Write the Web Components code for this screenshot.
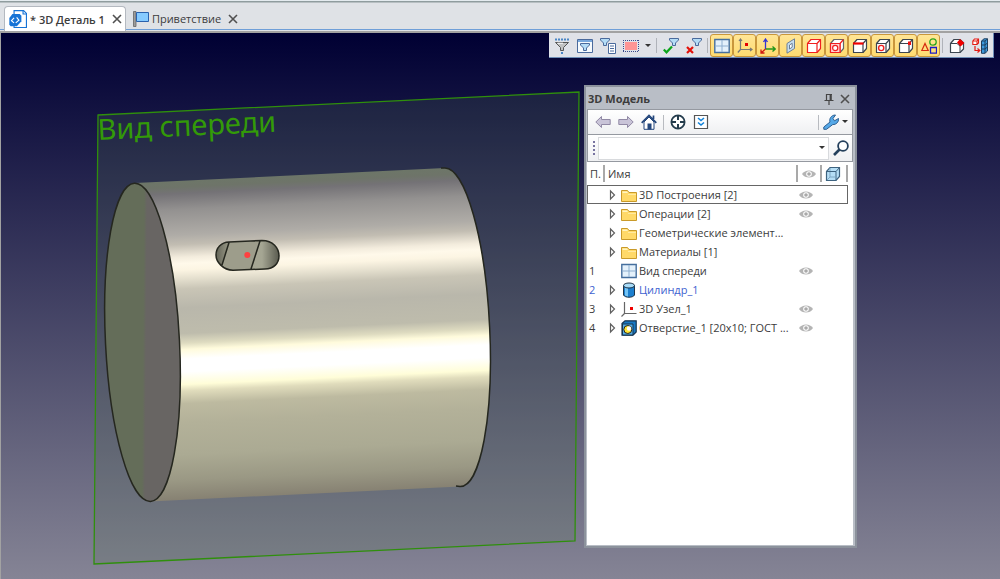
<!DOCTYPE html>
<html lang="ru">
<head>
<meta charset="UTF-8">
<title>3D Деталь 1</title>
<style>
    html, body {
        margin: 0;
        height: 100%;
        overflow: hidden;
    }
    body {
        font-family: "Open Sans", "Noto Sans", sans-serif;
        font-size: 11px;
        color: #3c3c3c;
    }
</style>
</head>
<body>
<cad-app></cad-app>

<script>
/* Icon set, every glyph is drawn on a 16x16 grid unless a viewBox is given */
const cube = (front, edge, extra = '') => `
    <path d="M1.5 5.5 5 1.5H14.5V10.5L11 14.5H1.5Z" fill="#fff" stroke="${edge}" stroke-width="1.2" stroke-linejoin="round"/>
    <path d="M1.5 5.5H11V14.5M11 5.5 14.5 1.5" fill="none" stroke="${front}" stroke-width="1.2"/>${extra}`;

const funnel = (x, y) => `
    <path transform="translate(${x} ${y})" d="M.5 .5H9.5V2L6.5 5V7.5H3.5V5L.5 2Z" fill="#b4dcf6" stroke="#4a6a9c"/>`;

const ICONS = {
    detail: `<path d="M4.5 .5H13L15.5 3V15.5H4.5Z" fill="#fff" stroke="#1673d6"/>
        <path d="M12.5 .5V3.5H15.5" fill="none" stroke="#1673d6"/>
        <path d="M3 3.5H9.5L11 5V10L7 14.5H1.5L.3 13V7Z" fill="#1673d6"/>
        <path d="M4.5 7 2.2 9.5 4.5 11.5M6 11.5 8.8 9 6.8 6.5" stroke="#fff" fill="none"/>`,
    flag: `<path d="M.5 .5H3V15.5H.5Z" fill="#9c9c9c" stroke="#666" stroke-width=".8"/>
        <path d="M3.5 1.5H15.5V10.5H3.5Z" fill="#86cbff" stroke="#2b62ad"/>`,
    close: `<path d="M4 4 12 12M12 4 4 12" stroke="#505050" stroke-width="1.6" fill="none"/>`,
    pin: `<path d="M5.5 3V9M5 3.5H11M3.5 9.5H12.5M8 10V14" stroke="#454545" fill="none" stroke-width="1.2"/>
        <path d="M9.7 3V9" stroke="#454545" stroke-width="2.2"/>`,
    filter: `<path d="M1 1.5H15" stroke="#4a86c5" stroke-width="2" stroke-dasharray="2 1"/>
        <path d="M1.5 4.5H14.5L9.5 9.5V12.5H6.5V9.5Z" fill="#c2c2c2" stroke="#555"/>
        <path d="M3.5 5.2H9" stroke="#fff"/><path d="M7 14H9V16H7Z" fill="#4a86c5"/>`,
    filterWindow: `<path d="M.5 1.5H15.5V14.5H.5Z" fill="#f6fafd" stroke="#4a6a9c"/>
        <path d="M1 2H15V4H1Z" fill="#79a8dc"/>${funnel(3, 5)}`,
    filterList: `${funnel(0, 0)}<path d="M8.5 5.5H15.5V15.5H8.5Z" fill="#fff" stroke="#4a6a9c"/>
        <path d="M10 8H14M10 10.5H14M10 13H14" stroke="#4a6a9c"/>`,
    area: `<path d="M2 4H14V12H2Z" fill="#ff9595"/>
        <path d="M0 2.5H16M0 13.5H16M.5 2V14M15.5 2V14" fill="none" stroke="#3a4a8c" stroke-dasharray="1 1"/>`,
    down: `<path d="M1 6H7L4 9Z" fill="#333"/>`,
    filterOk: `${funnel(6, 0)}<path d="M.8 11.5 3.5 14.3 9 8.5" fill="none" stroke="#0ca51b" stroke-width="2.2"/>`,
    filterNo: `${funnel(6, 0)}<path d="M1 9 7 15M7 9 1 15" fill="none" stroke="#e3120b" stroke-width="2.2"/>`,
    plane: `<path d="M.8 1.5H15.2V14.5H.8Z" fill="#e4f1fb" stroke="#456f9e" stroke-width="1.4"/>
        <path d="M8 2V14M1.5 8H14.5" stroke="#8eafd0"/>`,
    node: `<path d="M3.5 1V11.5H15M.8 14.5 3.5 11.5M2 3 3.5 1 5 3M13 10 15 11.5 13 13" fill="none" stroke="#777" stroke-width="1.2"/>
        <path d="M8 5H11V8H8Z" fill="#e60000"/>`,
    axes: `<path d="M5.5 11V1M3.5 4 5.5 1 7.5 4" fill="none" stroke="#3535d5" stroke-width="1.3"/>
        <path d="M5.5 11H15M12.5 8.5 15.2 11 12.5 13.5" fill="none" stroke="#24951c" stroke-width="1.3"/>
        <path d="M5.5 11 1 15M1 11.5V15H4.5" fill="none" stroke="#d11a10" stroke-width="1.3"/>`,
    sheet: `<path d="M4 5.5 11.5 .8V10.5L4 15.2Z" fill="#c6def0" stroke="#6b7f95"/>
        <path d="M6.5 7 9.2 5.3V9.2L6.5 11Z" fill="#fff" stroke="#6b7f95"/>`,
    cubeRed: cube('#f02020', '#f02020'),
    cubeFace: cube('#f02020', '#666', '<path d="M1.5 5.5H11V14.5H1.5Z" fill="#ffd5d5" stroke="#f02020" stroke-width="1.2"/><circle cx="6.2" cy="10" r="2.6" fill="#fff" stroke="#f02020" stroke-width="1.2"/>'),
    cubeEdge: cube('#3c4650', '#3c4650', '<path d="M1 5.5H11.5" stroke="#f00000" stroke-width="2.2"/>'),
    cubeHole: cube('#3c4650', '#3c4650', '<circle cx="6.2" cy="10" r="2.6" fill="#fff" stroke="#f02020" stroke-width="1.4"/>'),
    cubeVertex: cube('#3c4650', '#3c4650', '<path d="M10 3.500H13V7H10Z" fill="#f01010"/>'),
    shapes: `<path d="M.8 12.5 4 5.5 7.2 12.5Z" fill="none" stroke="#d52a10" stroke-width="1.2"/>
        <circle cx="12" cy="4" r="3.2" fill="none" stroke="#2aa51e" stroke-width="1.3"/>
        <path d="M9.5 9.5H15.5V15.2H9.5Z" fill="none" stroke="#1b1bc8" stroke-width="1.3"/>`,
    cubeCorner: `<path d="M1.500 5.500 5 1.500H11L14.500 5V11L11 14.500H1.500Z" fill="#fff" stroke="#3c4650" stroke-width="1.2" stroke-linejoin="round"/>
        <path d="M1.500 5.500H8L11 8V14.500" fill="none" stroke="#3c4650"/><path d="M8 4.500 11 1 15.500 5 11.500 8.500Z" fill="#f00000"/>`,
    rebuild: `<path d="M.8 3 2.5 1H6.5V5L5 6.5H.8ZM.8 3H5V6.5M5 3 6.5 1" fill="#fff" stroke="#e31b14" stroke-width="1.1"/>
        <path d="M3 8V12.5H7.5M5.5 10.5 7.8 12.5 5.5 14.5" fill="none" stroke="#e31b14" stroke-width="1.2"/>
        <path d="M9.5 3 12 .8H15.5V13L13 15.3H9.5Z" fill="#3c9ade" stroke="#1f3e5c"/>
        <path d="M9.5 3H13V15M13 3 15.5 1M9.5 7H13L15.5 5M9.5 11H13L15.5 9" fill="none" stroke="#1f3e5c"/>`,
    back: `<path d="M.8 8 6.500 2.500V5.500H15.2V10.500H6.500V13.5Z" fill="#c9c4d8" stroke="#9189a5"/>`,
    forward: `<path d="M15.2 8 9.500 2.500V5.500H.8V10.500H9.500V13.5Z" fill="#c9c4d8" stroke="#9189a5"/>`,
    home: `<path d="M3 8V15.3H13V8L8 3Z" fill="#fff" stroke="#24477c"/>
        <path d="M.7 8.8 8 1.5 15.3 8.8M12.5 5V1.5" fill="none" stroke="#24477c" stroke-width="1.7"/>
        <path d="M6.5 9.5H10.5V15.5H6.5Z" fill="#24477c"/>`,
    target: `<circle cx="8" cy="8" r="6.6" fill="#fff" stroke="#243c4c" stroke-width="1.8"/>
        <path d="M8 1V6M8 10V15M1 8H6M10 8H15" stroke="#243c4c" stroke-width="2"/>`,
    expand: `<path d="M1.5 1.5H14.5V14.5H1.5Z" fill="#fff" stroke="#555" stroke-width="1.2"/>
        <path d="M5 4 8 6.5 11 4M5 8.5 8 11 11 8.5" fill="none" stroke="#1382d8" stroke-width="1.6"/>`,
    wrench: `<path d="M.8 13 7 8C6 5 8 1 12.5 1L10 4.5 11.5 6.8 15.5 4.5C16 8 13 10.8 9.8 10.5L3.5 15.3H.8Z" fill="#56a9e8" stroke="#2d5f91" stroke-linejoin="round"/>`,
    search: `<circle cx="10" cy="6" r="4.9" fill="#fff" stroke="#24405c" stroke-width="1.8"/>
        <path d="M6.5 9.5 1 15" stroke="#24405c" stroke-width="2.6"/>`,
    eye: `<path d="M1 8C4 3.200 12 3.200 15 8C12 12.800 4 12.800 1 8Z" fill="#b4b4b4"/>
        <circle cx="8" cy="8" r="2.800" fill="#fff"/><circle cx="8" cy="8" r="1.800" fill="#aaa"/>`,
    cubeBlue: `<path d="M1.5 5.5 5 1.5H14.5V10.5L11 14.5H1.5Z" fill="#b5def6" stroke="#3d6380" stroke-width="1.2"/>
        <path d="M1.5 5.5H11V14.5M11 5.5 14.5 1.5" fill="none" stroke="#3d6380"/>
        <path d="M5 2V5M5 11H10.500M5 6V11L2 14" fill="none" stroke="#7fa9c6"/>`,
    expander: `<path d="M5.500 4 9.500 8 5.500 12Z" fill="#fff" stroke="#606060" stroke-width="1.2"/>`,
    folder: `<path d="M.5 3.5H6.5L8 5.5H15.5V14.5H.5Z" fill="#ffd968" stroke="#c99a2a"/>
        <path d="M1.5 4.5H6L7 6H1.5Z" fill="#fff4c0"/><path d="M7 7.5H15" stroke="#ffe9a0"/>`,
    cylinder: `<path d="M2.5 3.5V13C4 16 12 16 13.5 13V3.5Z" fill="#1d80cf" stroke="#1f3448"/>
        <path d="M4 5V13.5L7 14.5V6Z" fill="#74c4f5"/>
        <ellipse cx="8" cy="3.5" rx="5.5" ry="2.5" fill="#a9dcf8" stroke="#1f3448"/>`,
    nodeSmall: `<path d="M3.5 1V12.5H15.5M.5 15.5 3.5 12.5" fill="none" stroke="#666" stroke-width="1.2"/>
        <path d="M9 6H12V9H9Z" fill="#f00000"/>`,
    hole: `<path d="M1 3.5 4 .8H15.2V12L12 15.2H1Z" fill="#1779c4" stroke="#16344f" stroke-width="1.2"/>
        <path d="M1.5 4H12V15H1.5Z" fill="#53aee8" stroke="#16344f"/>
        <circle cx="6.8" cy="9.5" r="4" fill="#ffe531" stroke="#222"/><circle cx="8" cy="8.500" r="2.200" fill="#fff"/>`
};

/** Inline icon, <cad-icon name="home"> */
class CadIcon extends HTMLElement {
    constructor() {
        super();
        this.attachShadow({ mode: 'open' });
    }

    connectedCallback() {
        const name = this.getAttribute('name');
        const box = name === 'down' ? '0 0 8 16' : '0 0 16 16';
        this.shadowRoot.innerHTML = `
            <style>
                :host { display: inline-flex; width: 16px; height: 16px; flex: none; }
                :host([name="down"]) { width: 8px; }
                :host([name="detail"]) { width: 18px; height: 18px; }
                svg { width: 100%; height: 100%; display: block; }
            </style>
            <svg viewBox="${box}" aria-hidden="true">${ICONS[name] || ''}</svg>`;
    }
}

/** Icon button, "pressed" gives the yellow toggle look */
class ToolButton extends HTMLElement {
    constructor() {
        super();
        this.attachShadow({ mode: 'open' });
    }

    connectedCallback() {
        const toggle = this.hasAttribute('pressed') ? 'aria-pressed="true"' : '';
        this.shadowRoot.innerHTML = `
            <style>
                :host { display: inline-flex; width: 23px; height: 23px; flex: none; }
                :host([icon="down"]) { width: 12px; }
                :host([icon="wrench"]) { width: 20px; }
                button {
                    display: flex;
                    align-items: center;
                    justify-content: center;
                    width: 100%;
                    padding: 0;
                    border: 1px solid transparent;
                    border-radius: 3px;
                    background: none;
                }
                button[aria-pressed="true"] {
                    border-color: #c9973c;
                    background: linear-gradient(#ffe596, #ffdc70);
                }
            </style>
            <button type="button" ${toggle} aria-label="${this.getAttribute('label')}">
                <cad-icon name="${this.getAttribute('icon')}"></cad-icon>
            </button>`;
        const button = this.shadowRoot.querySelector('button');
        if (toggle) {
            button.addEventListener('click', () => {
                button.setAttribute('aria-pressed', button.getAttribute('aria-pressed') !== 'true');
            });
        }
    }
}

/** Document tab */
class DocTab extends HTMLElement {
    constructor() {
        super();
        this.attachShadow({ mode: 'open' });
    }

    connectedCallback() {
        this.shadowRoot.innerHTML = `
            <style>
                :host {
                    display: flex;
                    align-items: center;
                    box-sizing: border-box;
                    height: 25px;
                    padding: 0 0 0 4px;
                }
                :host([active]) {
                    border: 1px solid #b4b9c0;
                    border-bottom: 0;
                    border-radius: 4px 4px 0 0;
                    background: #fff;
                    font-weight: 600;
                }
                a {
                    display: flex;
                    align-items: center;
                    gap: 3px;
                    color: inherit;
                    text-decoration: none;
                    white-space: nowrap;
                }
                button {
                    display: flex;
                    margin-left: 4px;
                    padding: 0;
                    border: 0;
                    background: none;
                }
            </style>
            <a href="#"><cad-icon name="${this.getAttribute('icon')}"></cad-icon><slot></slot></a>
            <button type="button" aria-label="Закрыть"><cad-icon name="close"></cad-icon></button>`;
    }
}

class TabBar extends HTMLElement {
    constructor() {
        super();
        this.attachShadow({ mode: 'open' });
    }

    connectedCallback() {
        this.shadowRoot.innerHTML = `
            <style>
                :host {
                    display: flex;
                    align-items: flex-end;
                    gap: 3px;
                    box-sizing: border-box;
                    height: 33px;
                    flex: none;
                    padding-left: 4px;
                    border-bottom: 2px solid #a2a2a2;
                    background:
                        linear-gradient(#6f9fd8, #6f9fd8) 0 29px / 100% 1px no-repeat,
                        linear-gradient(#e4ebef 1px, #8f9c9e 1px, #8f9c9e 2px, #dfe2e6 3px);
                }
            </style>
            <slot></slot>`;
    }
}

/** Selection filter strip over the model window */
class FilterBar extends HTMLElement {
    constructor() {
        super();
        this.attachShadow({ mode: 'open' });
    }

    connectedCallback() {
        const groups = [
            [['filter', 'Фильтр'], ['filterWindow', 'Окно фильтра'], ['filterList', 'Список фильтров'], ['area', 'Выделение рамкой'], ['down', 'Ещё']],
            [['filterOk', 'Включить все'], ['filterNo', 'Выключить все']],
            [['plane', 'Плоскости'], ['node', 'Системы координат'], ['axes', 'Оси'], ['sheet', 'Поверхности'], ['cubeRed', 'Тела'],
                ['cubeFace', 'Грани'], ['cubeEdge', 'Рёбра'], ['cubeHole', 'Отверстия'], ['cubeVertex', 'Вершины'], ['shapes', 'Эскизы']],
            [['cubeCorner', 'Угол'], ['rebuild', 'Перестроить']]
        ];
        const html = groups.map((group, i) => `
            <div class="group">
                ${group.map(([icon, label]) => `<tool-button icon="${icon}" label="${label}" ${i === 2 ? 'pressed' : ''}></tool-button>`).join('')}
            </div>`).join('<span class="line"></span>');
        this.shadowRoot.innerHTML = `
            <style>
                :host {
                    display: flex;
                    align-items: center;
                    padding: 1px 2px 0 1px;
                    background: #e0e2e8;
                    border-bottom: 1px solid #6f8fb8;
                    border-right: 1px solid #6f8fb8;
                }
                .group { display: flex; }
                .line { width: 1px; height: 15px; margin: 0 2px; background: #b0b3ba; }
            </style>${html}`;
    }
}

/** Model tree */
class ModelPanel extends HTMLElement {
    constructor() {
        super();
        this.attachShadow({ mode: 'open' });
    }

    connectedCallback() {
        const rows = [
            { icon: 'folder', name: '3D Построения [2]', open: true, eye: true, current: true },
            { icon: 'folder', name: 'Операции [2]', open: true, eye: true },
            { icon: 'folder', name: 'Геометрические элемент...', open: true },
            { icon: 'folder', name: 'Материалы [1]', open: true },
            { num: 1, icon: 'plane', name: 'Вид спереди', eye: true },
            { num: 2, icon: 'cylinder', name: 'Цилиндр_1', open: true, blue: true },
            { num: 3, icon: 'nodeSmall', name: '3D Узел_1', open: true, eye: true },
            { num: 4, icon: 'hole', name: 'Отверстие_1 [20x10; ГОСТ ...', open: true, eye: true }
        ];
        const body = rows.map(row => `
            <tr class="${row.current ? 'current' : ''} ${row.blue ? 'blue' : ''}">
                <td>${row.num || ''}</td>
                <td><div class="name">
                    ${row.open ? '<button type="button" aria-label="Развернуть"><cad-icon name="expander"></cad-icon></button>' : '<span class="blank"></span>'}
                    <cad-icon name="${row.icon}"></cad-icon><span class="text">${row.name}</span>
                </div></td>
                <td>${row.eye ? '<button type="button" aria-label="Видимость"><cad-icon name="eye"></cad-icon></button>' : ''}</td>
                <td></td>
            </tr>`).join('');

        this.shadowRoot.innerHTML = `
            <style>
                :host {
                    display: flex;
                    flex-direction: column;
                    box-sizing: border-box;
                    padding: 1px 2px 1px 1px;
                    border: 2px solid #8c929c;
                    background: #b9bec6;
                }
                header {
                    display: flex;
                    align-items: center;
                    height: 21px;
                    padding-left: 1px;
                }
                h2 { margin: 0; font-size: 11px; font-weight: 700; flex: 1; }
                header button, td button, .combo button {
                    display: flex;
                    padding: 0;
                    border: 0;
                    background: none;
                }
                .bar {
                    display: flex;
                    align-items: center;
                    box-sizing: border-box;
                    height: 26px;
                    padding: 0 3px;
                    border: 1px solid #9599a0;
                    background: linear-gradient(#fff, #eff0f2);
                }
                .line { width: 1px; height: 15px; background: #b8bbc0; margin: 0 2px 0 3px; }
                .space { flex: 1; }
                .find { height: 27px; border-top: 0; padding: 0 0 0 5px; }
                .grip { width: 2px; height: 15px; margin-right: 3px; background: repeating-linear-gradient(#7773a0 0 2px, transparent 2px 4px); }
                .combo {
                    display: flex;
                    flex: 1;
                    align-items: center;
                    height: 21px;
                    min-width: 0;
                    padding-right: 2px;
                    border: 1px solid #d8dadd;
                    background: #fff;
                }
                input { flex: 1; min-width: 0; border: 0; outline: 0; padding: 0 4px; font: inherit; background: none; }
                .list { flex: 1; background: #fff; padding-right: 5px; }
                table {
                    width: 100%;
                    table-layout: fixed;
                    border-collapse: collapse;
                }
                th, td { height: 19px; padding: 0; line-height: 18px; text-align: left; font-weight: 400; white-space: nowrap; }
                th { height: 23px; }
                th div {
                    display: flex;
                    align-items: center;
                    height: 17px;
                    padding-left: 3px;
                    border-right: 2px solid #a9a9a9;
                }
                td:first-child { padding-left: 2px; }
                .current { outline: 1px solid #666; outline-offset: -1px; }
                .blue { color: #3e62d0; }
                .name { display: flex; align-items: center; height: 18px; }
                .text { margin-left: 2px; }
                .name button, .blank { width: 16px; }
                .num { width: 18px; }
                .vis { width: 24px; }
                .body { width: 26px; }
            </style>
            <header>
                <h2>3D Модель</h2>
                <button type="button" aria-label="Закрепить"><cad-icon name="pin"></cad-icon></button>
                <button type="button" aria-label="Закрыть"><cad-icon name="close"></cad-icon></button>
            </header>
            <div class="bar">
                <tool-button icon="back" label="Назад"></tool-button>
                <tool-button icon="forward" label="Вперёд"></tool-button>
                <tool-button icon="home" label="Домой"></tool-button>
                <span class="line"></span>
                <tool-button icon="target" label="Показать"></tool-button>
                <tool-button icon="expand" label="Развернуть всё"></tool-button>
                <span class="space"></span>
                <span class="line"></span>
                <tool-button icon="wrench" label="Настройка"></tool-button>
                <cad-icon name="down"></cad-icon>
            </div>
            <div class="bar find">
                <span class="grip"></span>
                <div class="combo">
                    <input type="text" aria-label="Поиск">
                    <button type="button" aria-label="История"><cad-icon name="down"></cad-icon></button>
                </div>
                <tool-button icon="search" label="Найти"></tool-button>
            </div>
            <div class="list">
                <table>
                    <colgroup><col class="num"><col><col class="vis"><col class="body"></colgroup>
                    <thead><tr>
                        <th><div>П.</div></th>
                        <th><div>Имя</div></th>
                        <th aria-label="Видимость"><div><cad-icon name="eye"></cad-icon></div></th>
                        <th aria-label="Тело"><div><cad-icon name="cubeBlue"></cad-icon></div></th>
                    </tr></thead>
                    <tbody>${body}</tbody>
                </table>
            </div>`;
    }
}

/** Model window: sketch plane, cylinder and slot */
class ModelView extends HTMLElement {
    constructor() {
        super();
        this.attachShadow({ mode: 'open' });
    }

    connectedCallback() {
        const stops = [
            [0, '#6d7668'], [2, '#6e7469'], [4, '#747276'], [9, '#939190'], [17, '#afaca7'], [20, '#c2bdb2'],
            [24, '#f3ecdd'], [26, '#fff9ea'], [28, '#fcf5e3'], [31, '#e3decd'], [34, '#c9c5b6'], [40, '#b9b7ab'],
            [48, '#bebcac'], [51, '#dedbc0'], [53, '#fffbdc'], [56, '#ffffff'], [60, '#ffffff'], [64, '#fffdd8'],
            [66, '#e0dcbc'], [70, '#bdbaa0'], [76, '#b3b199'], [86, '#abaa93'], [94, '#9a9884'], [100, '#878273']
        ].map(([at, color]) => `<stop offset="${at}%" stop-color="${color}"/>`).join('');

        this.shadowRoot.innerHTML = `
            <style>
                :host {
                    display: block;
                    position: relative;
                    overflow: hidden;
                    background:
                        linear-gradient(#a2a2a2, #a2a2a2) 0 0 / 1px 100% no-repeat,
                        linear-gradient(#000033, #858495);
                }
                svg { display: block; width: 100%; height: 100%; }
                text { font-family: "Noto Sans", sans-serif; font-size: 29px; fill: #339a08; }
                ::slotted(filter-bar) { position: absolute; top: 0; right: 6px; }
                ::slotted(model-panel) { position: absolute; top: 52px; right: 143px; bottom: 31px; width: 273px; }
            </style>
            <svg viewBox="0 33 1000 546" preserveAspectRatio="xMinYMin slice">
                <defs>
                    <linearGradient id="side" gradientUnits="userSpaceOnUse" x1="323" y1="174" x2="338" y2="492">${stops}</linearGradient>
                    <linearGradient id="face" gradientUnits="userSpaceOnUse" x1="143" y1="342" x2="146" y2="342" gradientTransform="rotate(3.300 143 342)">
                        <stop offset="0" stop-color="#646d59"/><stop offset="1" stop-color="#686563"/>
                    </linearGradient>
                    <linearGradient id="slotEnd"><stop offset="0.4" stop-color="#a5a693"/><stop offset="1" stop-color="#55564b"/></linearGradient>
                    <linearGradient id="slotStart"><stop offset="0" stop-color="#5f6054"/><stop offset="1" stop-color="#9c9c89"/></linearGradient>
                    <clipPath id="slotShape"><path d="M229 242 262 240.500C273 240.500 279 248 279 256C279 263 274 269 265 269L233 270.300C223 270 216 262 216 255C216 248 221 242.300 229 242Z"/></clipPath>
                </defs>
                <path d="M98 115 579 92 575 541 94 564Z" fill="rgb(85,115,80)" fill-opacity=".2" stroke="#2f8f0c" stroke-width="1.3"/>
                <text transform="translate(98 140) rotate(-2.700)">Вид спереди</text>
                <path d="M135 183 445 168A37 159 -2.900 0 1 460 486.500L150 501.500Z" fill="url(#side)"/>
                <path d="M441 168 445 168A37 159 -2.900 0 1 460 486.500L456 486" fill="none" stroke="#25271f" stroke-width="1.5"/>
                <ellipse cx="142.500" cy="342.300" rx="37" ry="159.300" transform="rotate(-2.900 142.500 342.300)" fill="url(#face)" stroke="#25271f" stroke-width="1.500"/>
                <g clip-path="url(#slotShape)">
                    <path d="M215 240H280V271H215Z" fill="#9d9d8b"/>
                    <path d="M260 240H280V271H250Z" fill="url(#slotEnd)"/>
                    <path d="M215 240H230L221 268H215Z" fill="url(#slotStart)"/>
                </g>
                <path d="M229 242 262 240.500C273 240.500 279 248 279 256C279 263 274 269 265 269L233 270.300C223 270 216 262 216 255C216 248 221 242.300 229 242ZM229 242.500 222 265M260 241 251 269" fill="none" stroke="#25271f" stroke-width="1.500"/>
                <circle cx="247.300" cy="255" r="3" fill="#ff4040"/>
            </svg>
            <slot></slot>`;
    }
}

class CadApp extends HTMLElement {
    constructor() {
        super();
        this.attachShadow({ mode: 'open' });
    }

    connectedCallback() {
        this.shadowRoot.innerHTML = `
            <style>
                :host { display: flex; flex-direction: column; height: 100vh; }
                model-view { flex: 1; min-height: 0; }
            </style>
            <tab-bar>
                <doc-tab icon="detail" active>* 3D Деталь 1</doc-tab>
                <doc-tab icon="flag">Приветствие</doc-tab>
            </tab-bar>
            <model-view>
                <filter-bar></filter-bar>
                <model-panel></model-panel>
            </model-view>`;
    }
}

customElements.define('cad-icon', CadIcon);
customElements.define('tool-button', ToolButton);
customElements.define('doc-tab', DocTab);
customElements.define('tab-bar', TabBar);
customElements.define('filter-bar', FilterBar);
customElements.define('model-panel', ModelPanel);
customElements.define('model-view', ModelView);
customElements.define('cad-app', CadApp);
</script>
</body>
</html>
